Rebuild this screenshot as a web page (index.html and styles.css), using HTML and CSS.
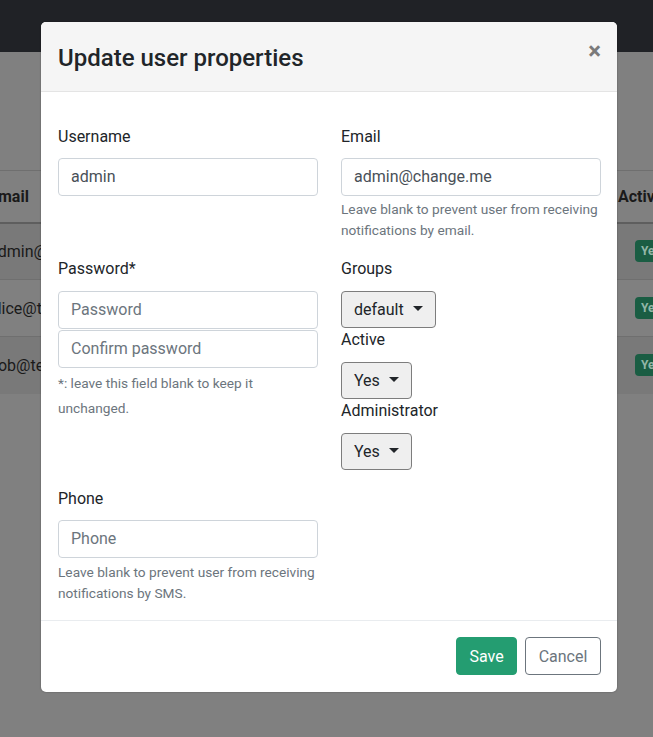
FILE: index.html
```html
<!DOCTYPE html>
<html>
<head>
<meta charset="utf-8">
<link rel="stylesheet" href="styles.css">
</head>
<body>
<div class="page">
  <div class="navbar"></div>
  <div class="content">
    <table class="users">
      <thead>
        <tr><th class="c-email">Email</th><th class="c-active">Active</th></tr>
      </thead>
      <tbody>
        <tr class="odd"><td class="c-email">admin@change.me</td><td class="c-active"><span class="badge">Yes</span></td></tr>
        <tr><td class="c-email">alice@test.com</td><td class="c-active"><span class="badge">Yes</span></td></tr>
        <tr class="odd"><td class="c-email">bob@test.com</td><td class="c-active"><span class="badge">Yes</span></td></tr>
      </tbody>
    </table>
  </div>
</div>

<div class="modal">
  <div class="modal-header">
    <h5 class="modal-title">Update user properties</h5>
    <span class="close">×</span>
  </div>
  <div class="modal-body">
    <div class="grid">
      <div class="group">
        <label class="label">Username</label>
        <div class="input value">admin</div>
      </div>
      <div class="group">
        <label class="label">Email</label>
        <div class="input value">admin@change.me</div>
        <div class="help">Leave blank to prevent user from receiving notifications by email.</div>
      </div>
      <div class="group">
        <label class="label label-pw">Password*</label>
        <div class="input placeholder">Password</div>
        <div class="input placeholder second">Confirm password</div>
        <div class="help help-pw">*: leave this field blank to keep it unchanged.</div>
      </div>
      <div class="group">
        <label class="label label-dd">Groups</label>
        <div class="dd">default<span class="caret"></span></div>
        <label class="label label-dd">Active</label>
        <div class="dd">Yes<span class="caret"></span></div>
        <label class="label label-dd">Administrator</label>
        <div class="dd">Yes<span class="caret"></span></div>
      </div>
      <div class="group group-phone">
        <label class="label">Phone</label>
        <div class="input placeholder">Phone</div>
        <div class="help help-phone">Leave blank to prevent user from receiving notifications by SMS.</div>
      </div>
    </div>
  </div>
  <div class="modal-footer">
    <button class="btn btn-save">Save</button>
    <button class="btn btn-cancel">Cancel</button>
  </div>
</div>
</body>
</html>
```
FILE: styles.css
```css
* { box-sizing: border-box; }
html, body { margin: 0; padding: 0; }
body {
  font-family: Roboto, "Liberation Sans", sans-serif;
  background: #808080;
  color: #212529;
  width: 653px;
  height: 737px;
  overflow: hidden;
  position: relative;
}
.page { width: 653px; overflow: hidden; }
.navbar { height: 52px; background: #202226; }
.content { padding-top: 118px; }
.users {
  border-collapse: collapse;
  table-layout: fixed;
  width: 720px;
  margin-left: -19px;
  font-size: 16px;
  color: #1a1a1a;
}
.users th, .users td {
  padding: 0 8px;
  text-align: left;
  border-top: 1px solid #6f6f6f;
  white-space: nowrap;
  overflow: hidden;
}
.users th { height: 52px; font-weight: 700; border-bottom: 2px solid #5e5e5e; }
.users td { height: 57px; }
.users tr.odd td { background: #797979; }
.c-email { width: 629px; }
.c-active { width: 91px; }
.badge {
  display: inline-block;
  margin-left: 17px;
  background: #1a5d43;
  color: #93b6a7;
  font-size: 12px;
  font-weight: 700;
  padding: 4px 6px;
  border-radius: 4px;
}

.modal {
  position: absolute;
  left: 41px;
  top: 22px;
  width: 576px;
  background: #fff;
  border-radius: 5px;
  overflow: hidden;
  box-shadow: 0 0 2px rgba(0,0,0,.35);
}
.modal-header {
  background: #f5f5f5;
  border-bottom: 1px solid #e4e4e4;
  padding: 22px 17px 18px;
  display: flex;
  justify-content: space-between;
  align-items: center;
}
.modal-title {
  margin: 0;
  font-size: 24px;
  line-height: 29px;
  font-weight: 500;
  color: #212529;
}
.close {
  font-size: 24px;
  font-weight: 700;
  color: #7a7a7a;
  line-height: 1;
  margin-right: -1px;
  margin-top: -15px;
}
.modal-body { padding: 33px 16px 16px 17px; }
.grid {
  display: grid;
  grid-template-columns: 260px 260px;
  column-gap: 23px;
  row-gap: 16px;
}
.group { display: flex; flex-direction: column; align-items: flex-start; }
.group-phone { margin-top: 1px; }
.label {
  font-size: 16px;
  line-height: 24px;
  margin-bottom: 9px;
  color: #212529;
}
.label-pw { margin-bottom: 10px; }
.label-dd { margin-bottom: 10px; }
.input {
  width: 260px;
  height: 38px;
  border: 1px solid #ced4da;
  border-radius: 4px;
  padding: 0 12px;
  font-size: 16px;
  line-height: 36px;
}
.input.value { color: #495057; }
.input.placeholder { color: #6c757d; }
.input.second { margin-top: 1px; }
.help {
  margin-top: 3px;
  font-size: 13.7px;
  line-height: 21px;
  color: #6c757d;
}
.help-pw { line-height: 25px; }
.help-phone { margin-top: 4px; line-height: 21px; }
.dd {
  height: 37px;
  display: flex;
  align-items: center;
  padding: 0 12px;
  background: #efefef;
  border: 1px solid #7d7d7d;
  border-radius: 4px;
  font-size: 16px;
  color: #212529;
}
.caret {
  display: inline-block;
  width: 0;
  height: 0;
  margin-left: 9px;
  border-top: 5px solid #212529;
  border-left: 5px solid transparent;
  border-right: 5px solid transparent;
  margin-top: -2px;
}
.modal-footer {
  border-top: 1px solid #e9ecef;
  padding: 16px 16px 17px;
  display: flex;
  justify-content: flex-end;
  gap: 8px;
}
.btn {
  font-family: inherit;
  font-size: 16px;
  height: 38px;
  padding: 0 12px;
  border-radius: 4px;
  cursor: pointer;
}
.btn-save {
  background: #249d71;
  border: 1px solid #249d71;
  color: #fff;
  width: 61px;
}
.btn-cancel {
  background: #fff;
  border: 1px solid #6c757d;
  color: #6c757d;
  width: 76px;
}
```
